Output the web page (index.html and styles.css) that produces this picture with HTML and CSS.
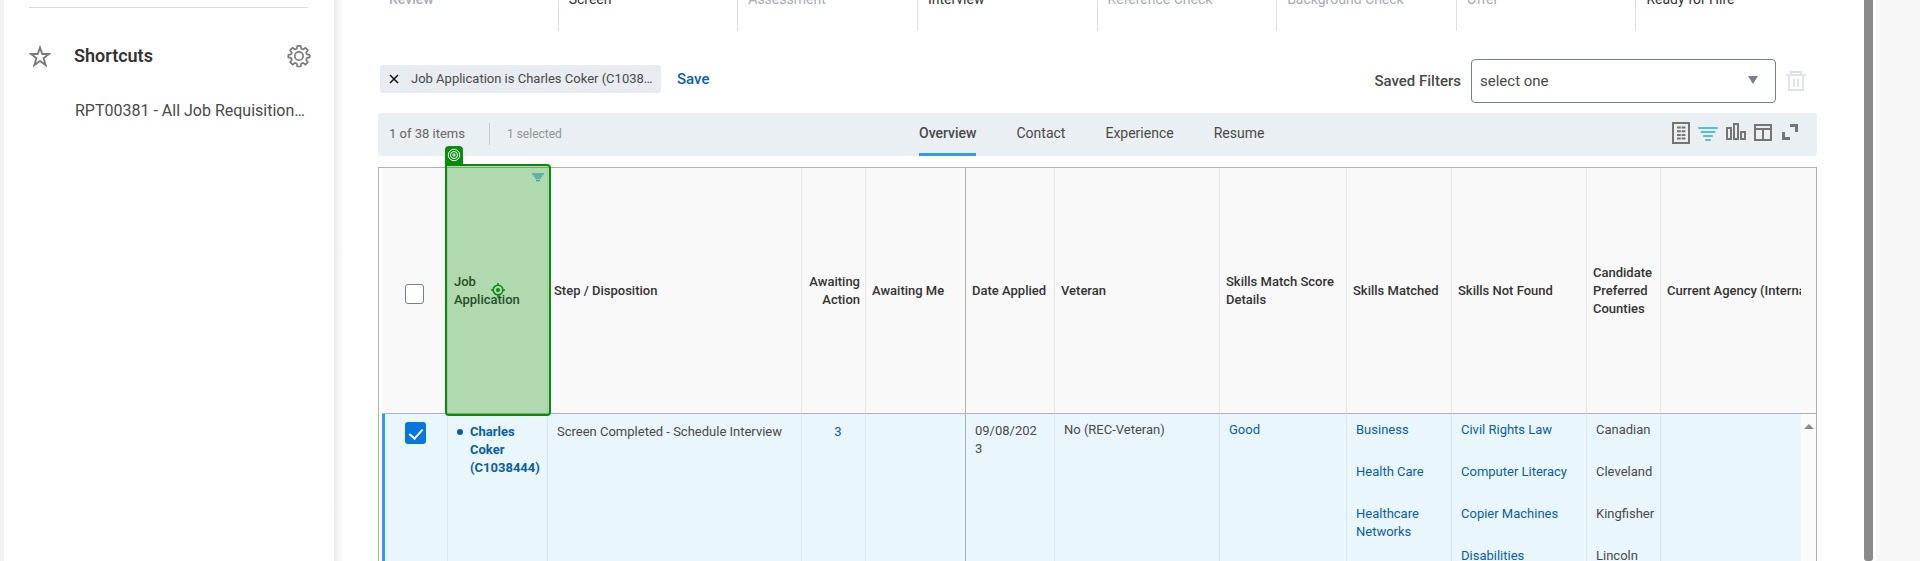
FILE: index.html
```html
<!DOCTYPE html>
<html lang="en">
<head>
<meta charset="utf-8">
<title>Candidates</title>
<link rel="stylesheet" href="styles.css">
</head>
<body>
<div class="page">
  <nav class="sidebar">
    <div class="shortcuts-head">
      <svg class="star" viewBox="0 0 22 22" width="22" height="22"><path d="M11 2.600l2.300 6.400h6.600l-5.300 4.200 2 6.900-5.600-4.200-5.600 4.200 2-6.900-5.300-4.200h6.600z" fill="none" stroke="#7b7b7b" stroke-width="1.900"/></svg>
      <h2>Shortcuts</h2>
      <button class="icon-btn" aria-label="Edit shortcuts">
        <svg viewBox="0 0 24 24" width="24" height="24" fill="none" stroke="#7b7b7b" stroke-width="1.700" stroke-linejoin="round"><circle cx="12" cy="12" r="4.200"/><path d="M10.300 1.800h3.400l.5 2.900 1.900.8 2.400-1.700 2.400 2.400-1.700 2.400.8 1.800 2.700.5v2.500l-2.700.5-.8 2 1.700 2.300-2.400 2.500-2.400-1.800-1.900.8-.5 2.800h-3.400l-.5-2.800-1.900-.8-2.400 1.800-2.400-2.500 1.700-2.300-.8-2-2.700-.5v-2.500l2.700-.5.8-1.800-1.700-2.400 2.400-2.400 2.400 1.700 1.900-.8z"/></svg>
      </button>
    </div>
    <a class="shortcut" href="#">RPT00381 - All Job Requisition…</a>
  </nav>

  <main class="main">
    <ol class="steps">
      <li class="muted strong">Review</li>
      <li>Screen</li>
      <li class="muted">Assessment</li>
      <li>Interview</li>
      <li class="muted">Reference Check</li>
      <li class="muted">Background Check</li>
      <li class="muted">Offer</li>
      <li>Ready for Hire</li>
    </ol>

    <div class="filters">
      <div class="filter-left">
        <div class="chip">
          <button class="icon-btn" aria-label="Remove filter"><svg viewBox="0 0 10 10" width="10" height="10"><path d="M1 1l8 8M9 1L1 9" stroke="#111" stroke-width="1.500"/></svg></button>
          <span>Job Application is Charles Coker (C1038…</span>
        </div>
        <button class="save">Save</button>
      </div>
      <div class="filter-right">
        <label for="saved">Saved Filters</label>
        <div class="select-box">
          <select id="saved"><option>select one</option></select>
          <svg class="caret" viewBox="0 0 10 8" width="10" height="8"><path d="M0 0h10L5 8z" fill="#75808c"/></svg>
        </div>
        <button class="icon-btn" aria-label="Delete filter" disabled>
          <svg viewBox="0 0 20 22" width="20" height="22" fill="none" stroke="#dde3e8" stroke-width="2"><path d="M0 5h20M5 4V2h10v2M3 5v15h14V5M8 9v8M12 9v8"/></svg>
        </button>
      </div>
    </div>

    <div class="toolbar">
      <div class="counts"><span class="total">1 of 38 items</span><span class="selected">1 selected</span></div>
      <div class="tabs">
        <button class="tab active">Overview</button>
        <button class="tab">Contact</button>
        <button class="tab">Experience</button>
        <button class="tab">Resume</button>
      </div>
      <div class="tools">
        <button class="icon-btn" aria-label="Export"><svg viewBox="0 0 18 22" width="18" height="22"><path d="M1 1h16v20H1z" fill="none" stroke="#757575" stroke-width="2"/><path d="M5 5.500h8.500M5 9.200h8.500M5 13h8.500M5 16.500h8.500" stroke="#757575" stroke-width="2" stroke-dasharray="3.800 .8"/></svg></button>
        <button class="icon-btn" aria-label="Filter"><svg viewBox="0 0 20 22" width="20" height="22"><path d="M1 6h18M3.500 10h13M6 14h8M8 18h4" stroke="#5bb9e0" stroke-width="2" stroke-linecap="round"/></svg></button>
        <button class="icon-btn" aria-label="Charts"><svg viewBox="1 0 20 22" width="20" height="22"><path d="M2 6h4v11H2zM9 2h4v15H9zM16 10h4v7h-4z" fill="none" stroke="#757575" stroke-width="2"/></svg></button>
        <button class="icon-btn" aria-label="Columns"><svg viewBox="0 0 18 22" width="18" height="22"><path d="M1 3h16v15H1zM1 7h16M9 7v11" fill="none" stroke="#757575" stroke-width="2"/></svg></button>
        <button class="icon-btn" aria-label="Full screen"><svg viewBox="0 0 18 22" width="18" height="22"><path d="M10 3.500h6.500V10M3.500 10v6.500H10" fill="none" stroke="#757575" stroke-width="3"/></svg></button>
      </div>
    </div>

    <div class="grid">
      <table>
        <colgroup>
          <col class="w-check"><col class="w-100"><col class="w-254"><col class="w-64"><col class="w-100"><col class="w-89"><col class="w-165"><col class="w-127"><col class="w-105"><col class="w-135"><col class="w-74"><col><col class="w-scroll">
        </colgroup>
        <thead>
          <tr>
            <th class="check"><input type="checkbox" aria-label="Select all"></th>
            <th class="marked">Job Application
              <svg class="col-filter" viewBox="0 0 12 9" width="12" height="9"><path d="M0 1h12M1.500 3h9M3 5h6M4 7.500h4" stroke="#5bb9e0" stroke-width="1.600"/></svg>
              <div class="marker">
                <span class="marker-tag"><svg viewBox="0 0 14 14" width="14" height="14" fill="none" stroke="#fff"><circle cx="7" cy="7" r="5.700"/><circle cx="7" cy="7" r="3.500"/><circle cx="7" cy="7" r="1.200"/></svg></span>
                <svg viewBox="0 0 14 14" width="14" height="14" fill="none" stroke="#068e0a" stroke-width="1.600"><circle cx="7" cy="7" r="4.800"/><circle cx="7" cy="7" r="1.200" fill="#068e0a"/><path d="M7 0v3M7 11v3M0 7h3M11 7h3"/></svg>
              </div>
            </th>
            <th>Step / Disposition</th>
            <th class="right">Awaiting Action</th>
            <th class="freeze">Awaiting Me</th>
            <th>Date Applied</th>
            <th>Veteran</th>
            <th>Skills Match Score Details</th>
            <th>Skills Matched</th>
            <th>Skills Not Found</th>
            <th>Candidate Preferred Counties</th>
            <th class="clip">Current Agency (Internal)</th>
            <th></th>
          </tr>
        </thead>
        <tbody>
          <tr>
            <td class="check"><input type="checkbox" aria-label="Select Charles Coker" checked></td>
            <td class="low name"><a href="#">Charles Coker (C1038444)</a></td>
            <td class="low">Screen Completed - Schedule Interview</td>
            <td class="low center"><a href="#">3</a></td>
            <td class="freeze"></td>
            <td class="date">09/08/2023</td>
            <td>No (REC-Veteran)</td>
            <td><a href="#">Good</a></td>
            <td><ul><li><a href="#">Business</a></li><li><a href="#">Health Care</a></li><li><a href="#">Healthcare Networks</a></li></ul></td>
            <td><ul><li><a href="#">Civil Rights Law</a></li><li><a href="#">Computer Literacy</a></li><li><a href="#">Copier Machines</a></li><li><a href="#">Disabilities</a></li></ul></td>
            <td><ul><li>Canadian</li><li>Cleveland</li><li>Kingfisher</li><li>Lincoln</li></ul></td>
            <td class="last"></td>
            <td class="track"><svg viewBox="0 0 10 5" width="10" height="5"><path d="M5 0l5 5H0z" fill="#8a8a8a"/></svg></td>
          </tr>
        </tbody>
      </table>
    </div>
  </main>
  <div class="scrollbar"></div>
  <div class="gutter"></div>
</div>
</body>
</html>
```
FILE: styles.css
```css
* { box-sizing: border-box; }
body { margin: 0; font: 13px/18px Roboto, sans-serif; color: #494949; background: #fff; }
button, input, select { font: inherit; color: inherit; }
button { border: 0; background: none; padding: 0; }
a { color: #0b5cad; text-decoration: none; }
ul, ol { list-style: none; margin: 0; padding: 0; }
svg { display: block; }
.icon-btn { display: flex; flex: none; }

.page { display: flex; height: 100vh; overflow: hidden; }
.sidebar { width: 334px; flex: none; border-left: 4px solid #f1f1f1; padding: 7px 24px 0 25px; }
.shortcuts-head { display: flex; align-items: center; border-top: 1px solid #dadada; padding-top: 36px; margin-right: 2px; }
.shortcuts-head h2 { flex: 1; margin: 0 0 0 23px; font-size: 18px; line-height: 24px; font-weight: 600; color: #333; }
.shortcuts-head .icon-btn { margin-right: -3px; }
.shortcut { display: block; margin: 31px -2px 0 46px; font-size: 16px; line-height: 24px; color: #494949; white-space: nowrap; }

.main { flex: 1; min-width: 0; padding: 0 47px 0 44px; background: linear-gradient(to right, #ececec, #fff 10px); }
.steps { display: grid; grid-template-columns: repeat(8, 1fr); margin-top: -10px; padding-right: 2px; }
.steps li { height: 41px; padding-left: 11px; font-size: 14px; line-height: 18px; color: #333; }
.steps li + li { border-left: 1px solid #dde0e6; padding-left: 10px; }
.steps .muted { color: #a5adb6; }
.steps .strong { font-weight: 500; }

.filters { display: flex; justify-content: space-between; padding: 28px 11px 10px 2px; }
.filter-left { display: flex; align-items: flex-start; gap: 16px; padding-top: 6px; }
.chip { display: flex; align-items: center; gap: 12px; width: 281px; height: 28px; padding: 0 5px 0 9px; border-radius: 3px; background: #e8ecf0; }
.chip span { white-space: nowrap; }
.save { font-size: 15px; line-height: 28px; font-weight: 500; color: #0b5cb8; }
.filter-right { display: flex; align-items: center; gap: 10px; font-size: 15px; }
.filter-right label { font-weight: 500; }
.select-box { position: relative; width: 305px; }
.select-box select { appearance: none; width: 100%; height: 44px; padding: 0 8px; border: 1px solid #75808c; border-radius: 4px; background: #fff; }
.caret { position: absolute; right: 18px; top: 17px; pointer-events: none; }

.toolbar { display: grid; grid-template-columns: 541px 1fr auto; align-items: center; height: 43px; padding-right: 19px; border-radius: 3px; background: #e9eff2; }
.counts { display: flex; align-items: center; padding: 0 0 2px 11px; color: #666; }
.total { line-height: 22px; padding-right: 24px; border-right: 1px solid #c6cacd; }
.selected { padding-left: 17px; font-size: 12px; color: #949494; }
.tabs { display: flex; gap: 40px; align-self: stretch; }
.tab { font-size: 14px; border-bottom: 3px solid transparent; }
.tab.active { font-weight: 500; border-color: #2f9bf3; }
.tools { display: flex; gap: 8px; padding-bottom: 4px; }

.grid { margin-top: 11px; border: 1px solid #b0b0b0; border-bottom: 0; padding-left: 3px; }
table { width: 100%; table-layout: fixed; border-collapse: separate; border-spacing: 0; }
.w-check { width: 66px; } .w-100 { width: 100px; } .w-254 { width: 254px; } .w-64 { width: 64px; }
.w-89 { width: 89px; } .w-165 { width: 165px; } .w-127 { width: 127px; } .w-105 { width: 105px; }
.w-135 { width: 135px; } .w-74 { width: 74px; } .w-scroll { width: 15px; }
th { height: 246px; padding: 0 5px 0 6px; border-right: 1px solid #e6e6e6; border-bottom: 1px solid #b0b0b0; background: #f9f9f9; font-weight: 500; color: #333; text-align: left; }
th:nth-last-child(-n+2) { border-right: 0; }
th:last-child, .track { padding: 0; }
th.right { text-align: right; }
th.clip { padding-right: 0; overflow: hidden; white-space: nowrap; }
th.freeze, td.freeze { border-right-color: #b0b0b0; }
td { height: 220px; padding: 7px 4px 0 9px; border-right: 1px solid #e2e6e8; background: #e9f7fd; vertical-align: top; }
td li { margin-bottom: 24px; }
td.low { padding-top: 9px; }
td.center { text-align: center; padding: 9px 0 0 9px; }
td.date { padding: 8px 14px 0 9px; word-break: break-all; }
td.name { padding-left: 22px; font-weight: 700; }
.name a::before { content: ""; position: absolute; width: 6px; height: 6px; margin: 6px 0 0 -13px; border-radius: 50%; background: #0b5cb8; }
td.last, td.track { border-right: 0; }
td.track { background: #fbfbfb; padding: 10px 0 0 3px; }
td.check { border-left: 3px solid #2f9bf3; padding: 8px 0 0 20px; }
th.check { padding: 6px 0 0 23px; }
input[type=checkbox] { appearance: none; display: block; margin: 0; width: 19px; height: 20px; border: 1px solid #75808c; border-radius: 3px; background: #fff; }
input[type=checkbox]:checked { width: 21px; height: 22px; border: 0; background: #0875e1; }
input[type=checkbox]:checked::before { content: ""; display: block; width: 6px; height: 11px; margin: 4px auto 0; border: solid #fff; border-width: 0 2px 2px 0; transform: rotate(42deg); }

.marked { position: relative; }
.col-filter { position: absolute; top: 5px; right: 3px; }
.marker { position: absolute; inset: -4px -4px -3px -3px; display: flex; align-items: center; justify-content: center; border: 2px solid #068e0a; border-radius: 0 4px 4px 4px; background: rgba(5, 143, 8, .3); z-index: 1; }
.marker-tag { position: absolute; left: -2px; top: -20px; width: 18px; height: 18px; padding: 2px; border-radius: 4px 4px 0 0; background: #068e0a; }

.scrollbar { width: 9px; flex: none; background: #8a8a8a; border-radius: 0 0 3px 3px; }
.gutter { width: 47px; flex: none; border-left: 3px solid #fff; background: #f7f7f7; }
```
